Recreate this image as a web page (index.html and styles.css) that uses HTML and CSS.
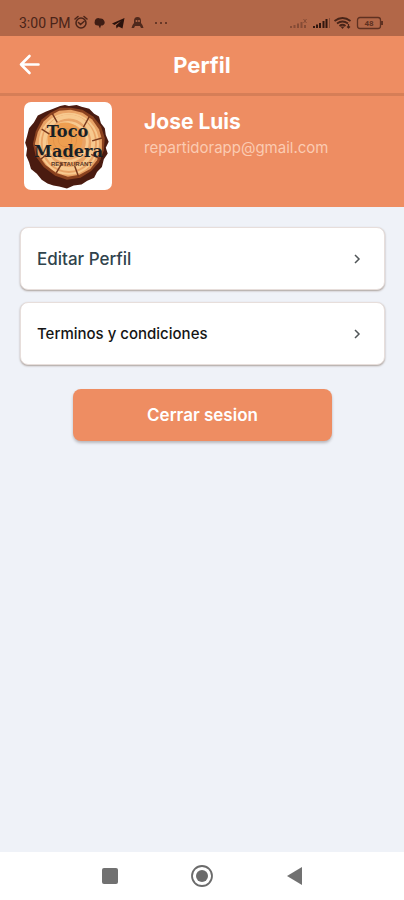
FILE: index.html
```html
<!DOCTYPE html>
<html lang="es">
<head>
<meta charset="utf-8">
<meta name="viewport" content="width=device-width, initial-scale=1">
<title>Perfil</title>
<link rel="stylesheet" href="styles.css">
</head>
<body>
<div class="status">
  <time class="clock">3:00 PM</time>
  <svg class="notices" width="98" height="16" viewBox="0 0 98 16" aria-hidden="true">
    <g fill="none" stroke="#4a2418" stroke-width="1.5" stroke-linecap="round">
      <circle cx="7" cy="8" r="5"/><path d="M1 4l3-2.500M13 4l-3-2.500M4.500 7.500l2 2 3.500-3"/>
    </g>
    <path fill="#3f1d14" d="M21 5q2-3 5-1.500 3-.5 4 2 2 3-1.500 5H27l-1 3-1.500-3Q21 11 20.500 8z"/>
    <path fill="#2a120c" d="M38 8.500L50.500 3 48.500 13.500 44.500 11.500 42.500 13.500 42 10.500 47 6 40.500 10z"/>
    <path fill="#4f291c" d="M60 6q0-4 3.500-4T67 6v2q2 2 2.500 5H67l-1-2h-5l-1 2h-2.500q.5-3 2.500-5z"/>
    <g fill="#b26748"><circle cx="62.500" cy="6" r="1"/><circle cx="65" cy="6" r="1"/></g>
    <g fill="#4f291c"><circle cx="82" cy="8" r="1"/><circle cx="87" cy="8" r="1"/><circle cx="92" cy="8" r="1"/></g>
  </svg>
  <svg class="signals" width="96" height="16" viewBox="0 0 96 16" role="img" aria-label="Red y batería 48">
    <path stroke="#854b35" stroke-width="2" d="M3 13v-2M6.500 13v-3M10 13V8.500M13.500 13V7M17 13v-3"/>
    <path stroke="#854b35" fill="none" d="M15.500 4l3 4M18.500 4l-3 4"/>
    <path stroke="#32170f" stroke-width="2" d="M26 13v-2M29 13v-3.500M32 13V8M35.500 13V6M38.500 13V4"/>
    <path stroke="#854b35" d="M41.500 3v10"/>
    <g fill="none" stroke="#482418" stroke-width="1.800"><path d="M46.500 6q8-6 16 0M49 8.500q5.500-4 11 0M51.500 11q3-2.500 6 0"/><path stroke-width="1.200" d="M60.500 9v4m-1.500-1.500l1.500 1.500 1.500-1.500"/></g>
    <path fill="#482418" d="M52.500 11.500h4l-2 2.500z"/>
    <rect x="69.500" y="2.500" width="23" height="11" rx="2.500" fill="none" stroke="#5f3121" stroke-width="1.300"/>
    <path fill="#5f3121" d="M93 6h2v4h-2z"/>
    <text class="charge" x="81" y="11" text-anchor="middle">48</text>
  </svg>
</div>
<header class="bar">
  <button class="back" type="button" aria-label="Volver">
    <svg width="22" height="22" viewBox="0 0 22 22"><path fill="none" stroke="#fff" stroke-width="2.600" stroke-linecap="round" stroke-linejoin="round" d="M19.500 10.500H2M10.500 2L2 10.500l8.500 8.500"/></svg>
  </button>
  <h1>Perfil</h1>
</header>
<section class="profile">
  <svg class="logo" viewBox="0 0 87 87" role="img" aria-label="Toco Madera Restaurant">
    <rect width="87" height="87" rx="7" fill="#fff"/>
    <g transform="translate(5 0) scale(.96)">
      <path fill="#4a1b10" d="M32 4l5-1 4 1 8-1 5 2 8 2 5 5 5 3 2 7 4 5 1 7 3 7-3 6 2 6-4 6-2 8-5 5-3 6-7 3-6 4-8 1-7 3-8-2-6-1-6-2-6-4-5-6-6-5-2-7-3-7 1-7-2-6 2-7 2-8 5-6 4-7 8-4z"/>
      <path fill="#8b421f" d="M32 6l11 0 12 2 11 7 8 10 4 12-1 13-5 12-8 9-11 7-14 2-12-4-12-9-8-11-3-13 3-13 6-12 9-7z"/>
      <path fill="#e9a366" d="M31 9l12-1 12 3 10 7 7 10 3 10 0 11-5 11-7 9-11 6-12 2-12-4-11-8-8-11-3-11 3-12 6-11 7-6z"/>
      <g fill="none" stroke="#f7c98f">
        <ellipse cx="41" cy="43" rx="30" ry="31" stroke-width="2"/>
        <ellipse cx="41" cy="42" rx="25" ry="27" stroke-width="4"/>
        <ellipse cx="40" cy="41" rx="20" ry="20" stroke-width="3"/>
      </g>
      <ellipse cx="37" cy="39" rx="18" ry="18" fill="#ee9e50"/>
      <g fill="none" stroke="#e29349"><circle cx="37" cy="39" r="12"/><circle cx="37" cy="39" r="7"/></g>
      <path fill="none" stroke="#79391d" stroke-width="1.500" d="M24 12l5 9M62 15l-6 11M75 37l-10 3M74 59l-10-5M51 77l-4-11M28 73l6-10M12 59l6-5M13 28l8 5"/>
    </g>
    <g class="brand" text-anchor="middle"><text class="toco" x="43" y="35">Toco</text><text class="madera" x="44" y="54">Madera</text><text class="kind" x="47" y="63">RESTAURANT</text></g>
  </svg>
  <div class="person"><h2>Jose Luis</h2><p>repartidorapp@gmail.com</p></div>
</section>
<main class="content">
  <nav class="options">
    <a class="option edit" href="#editar">Editar Perfil<svg width="8" height="12" viewBox="0 0 8 12" aria-hidden="true"><path d="M2 2l4 4-4 4"/></svg></a>
    <a class="option terms" href="#terminos">Terminos y condiciones<svg width="8" height="12" viewBox="0 0 8 12" aria-hidden="true"><path d="M2 2l4 4-4 4"/></svg></a>
  </nav>
  <button class="logout" type="button">Cerrar sesion</button>
</main>
<footer class="system">
  <button type="button" aria-label="Recientes"><svg width="24" height="24" viewBox="0 0 24 24"><rect x="4" y="4" width="16" height="16" rx="2" fill="#717171"/></svg></button>
  <button type="button" aria-label="Inicio"><svg width="24" height="24" viewBox="0 0 24 24"><circle cx="12" cy="12" r="10" fill="none" stroke="#6b6b6b" stroke-width="1.800"/><circle cx="12" cy="12" r="6" fill="#6b6b6b"/></svg></button>
  <button type="button" aria-label="Atrás"><svg width="24" height="24" viewBox="0 0 24 24"><path fill="#717171" d="M5 12L20 3v18z"/></svg></button>
</footer>
</body>
</html>
```

FILE: styles.css
```css
* { box-sizing: border-box; }
body {
  margin: 0;
  min-height: 100vh;
  display: flex;
  flex-direction: column;
  background: #eff2f8;
  font-family: Inter, "Open Sans", sans-serif;
}
h1, h2, p { margin: 0; }
button { border: 0; padding: 0; font-family: inherit; background: none; }
svg { display: block; flex: none; }

.status {
  height: 36px;
  padding: 10px 20px 0 19px;
  display: flex;
  align-items: center;
  background: #b26748;
}
.clock { color: #4a2418; font: 14px/16px Roboto, sans-serif; }
.notices { margin-left: 3px; }
.signals { margin-left: auto; }
.charge { font: bold 8px Roboto, sans-serif; fill: #5f3121; }

.bar {
  height: 60px;
  display: grid;
  grid-template-columns: 60px 1fr 60px;
  align-items: center;
  background: #ee8d62;
  border-bottom: 3px solid #d67e57;
}
.back { width: 22px; margin-left: 19px; }
h1 { color: #fff; font-size: 22px; line-height: 28px; font-weight: 700; text-align: center; }

.profile {
  height: 111px;
  padding: 6px 24px;
  display: flex;
  align-items: flex-start;
  gap: 32px;
  background: #ee8d62;
}
.logo { width: 88px; height: 88px; }
.brand { fill: #191f26; font-family: "DejaVu Serif", serif; font-weight: bold; }
.toco { font-size: 16px; }
.madera { font-size: 16px; }
.kind { font: bold 6px "Liberation Sans", sans-serif; fill: #5b3824; }
.person { padding-top: 6px; }
h2 { color: #fff; font-size: 21px; line-height: 28px; font-weight: 700; }
.person p { color: #fbcbb2; font-size: 15px; line-height: 24px; }

.content { flex: 1; padding: 20px 19px 0 20px; }
.options { display: grid; gap: 12px; }
.option {
  height: 63px;
  padding: 0 23px 0 16px;
  display: flex;
  align-items: center;
  justify-content: space-between;
  border: 1px solid #e7dedb;
  border-radius: 8px;
  background: #fff;
  box-shadow: 0 1px 2px #aaa09b;
  text-decoration: none;
}
.edit { color: #30434c; font-size: 17px; font-weight: 500; }
.terms { color: #151515; font-size: 15px; font-weight: 500; }
.option path { fill: none; stroke: #505558; stroke-width: 1.5; }
.logout {
  display: block;
  width: 71%;
  height: 52px;
  margin: 24px auto 0;
  border-radius: 8px;
  color: #fff;
  background: #ee8d62;
  box-shadow: 0 2px 3px #b9b7bb;
  font-size: 17px;
  font-weight: 600;
}

.system {
  height: 48px;
  display: flex;
  align-items: center;
  justify-content: center;
  gap: 68px;
  background: #fff;
}
```
